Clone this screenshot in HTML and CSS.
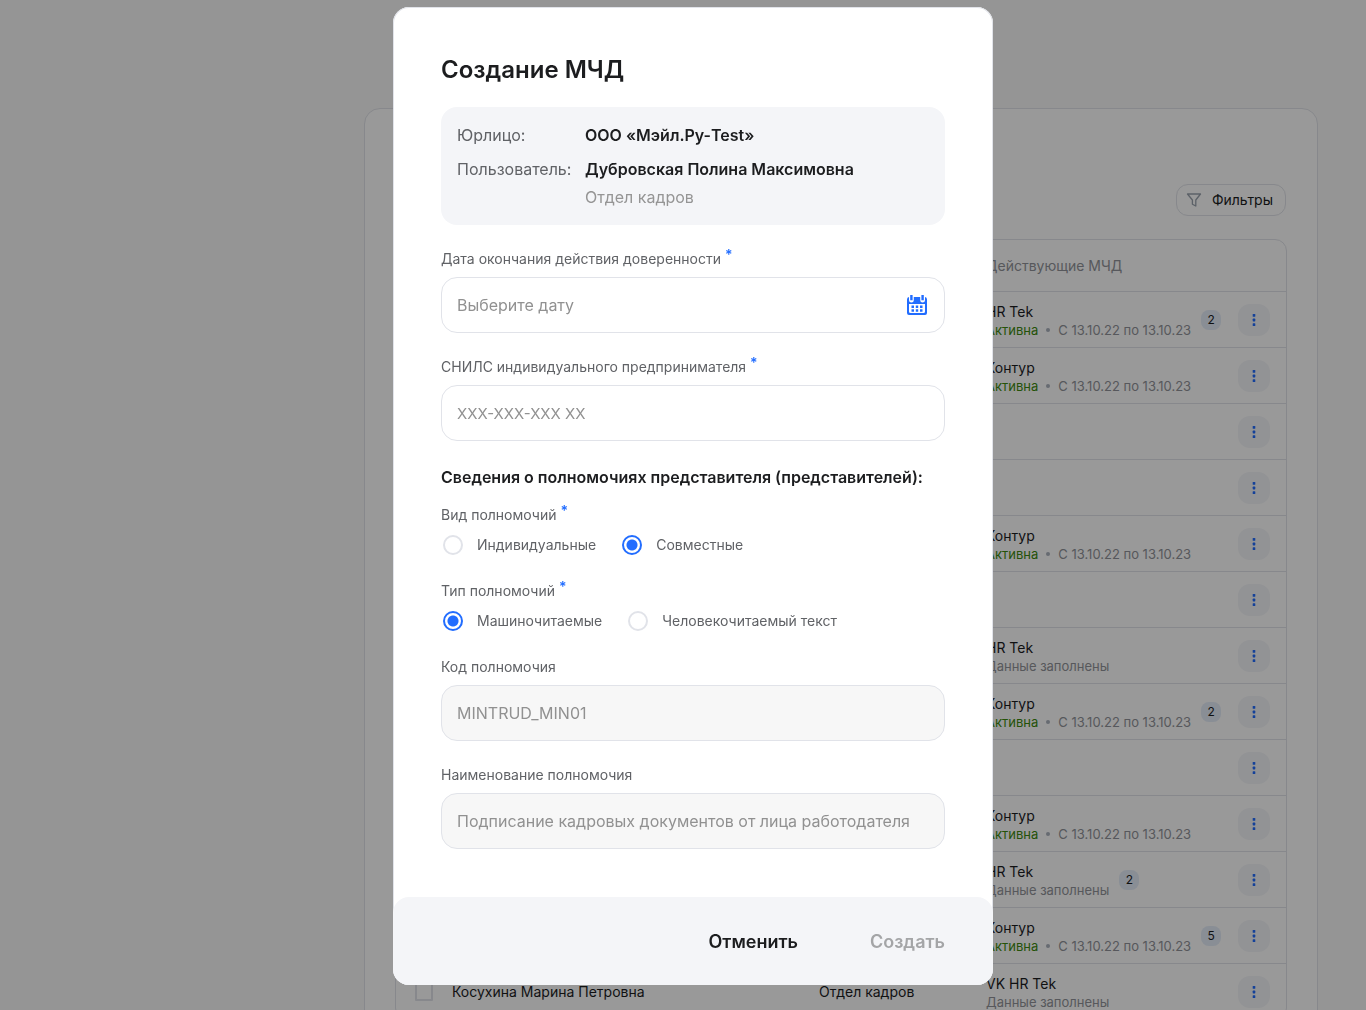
FILE: index.html
```html
<!DOCTYPE html>
<html lang="ru">
<head>
<meta charset="utf-8">
<meta name="viewport" content="width=device-width, initial-scale=1">
<title>Создание МЧД</title>
<link rel="stylesheet" href="styles.css">
</head>
<body>
<svg class="sprite" aria-hidden="true">
  <symbol id="dots" viewBox="0 0 16 16"><rect x="6.700" y="2" width="2.600" height="2.800" rx=".6"/><rect x="6.700" y="6.600" width="2.600" height="2.800" rx=".6"/><rect x="6.700" y="11.200" width="2.600" height="2.800" rx=".6"/></symbol>
</svg>
<main class="page">
  <section class="card">
    <div class="toolbar">
      <button class="filter" type="button">
        <svg width="16" height="16" viewBox="0 0 16 16" fill="none" stroke="currentColor" stroke-width="1.300" stroke-linejoin="round"><path d="M1.500 2h13L9.800 8v6l-3.400-1.800V8z"/></svg>
        Фильтры
      </button>
    </div>
    <div class="table-frame">
      <table class="table">
        <colgroup><col class="col-check"><col><col class="col-dept"><col class="col-docs"><col class="col-menu"></colgroup>
        <thead><tr><th></th><th></th><th></th><th class="docs-head" scope="col">Действующие МЧД</th><th></th></tr></thead>
        <tbody id="rows"></tbody>
      </table>
    </div>
  </section>
</main>

<div class="overlay">
  <form class="modal" role="dialog" aria-modal="true" aria-labelledby="modal-title">
    <div class="modal-body">
      <h1 class="title" id="modal-title">Создание МЧД</h1>
      <dl class="info">
        <dt>Юрлицо:</dt>
        <dd>ООО «Мэйл.Ру-Test»</dd>
        <dt>Пользователь:</dt>
        <dd>Дубровская Полина Максимовна<span class="info-note">Отдел кадров</span></dd>
      </dl>
      <div class="field">
        <label class="label" for="date">Дата окончания действия доверенности <span class="required">*</span></label>
        <div class="control">
          <input class="input" id="date" type="text" placeholder="Выберите дату">
          <button class="calendar" type="button" aria-label="Открыть календарь">
            <svg width="20" height="20" viewBox="0 0 20 20"><path fill="currentColor" fill-rule="evenodd" d="M0 4.500Q0 2 2 2v3.200a2 2 0 0 0 4.800 0V2h6.400v3.200a2 2 0 0 0 4.800 0V2q2 0 2 2.500V18a2 2 0 0 1-2 2H2a2 2 0 0 1-2-2zM2 9v7.500q0 1.500 1.500 1.500h13q1.500 0 1.500-1.500V9z"/><path fill="currentColor" d="M3.200 0h2.400v5.200H3.200zM14.400 0h2.400v5.200h-2.400zM4.500 10.500H7V13H4.500zM8.800 10.500h2.400V13H8.800zM13 10.500h2.500V13H13zM4.500 14.300H7v2.400H4.500zM8.800 14.300h2.400v2.400H8.800zM13 14.300h2.500v2.400H13z"/></svg>
          </button>
        </div>
      </div>
      <div class="field">
        <label class="label" for="snils">СНИЛС индивидуального предпринимателя <span class="required">*</span></label>
        <input class="input mask" id="snils" type="text" placeholder="XXX-XXX-XXX XX">
      </div>
      <h2 class="subtitle">Сведения о полномочиях представителя (представителей):</h2>
      <fieldset class="group group-first">
        <legend class="label">Вид полномочий <span class="required">*</span></legend>
        <div class="options">
          <label class="option"><input class="radio" type="radio" name="kind">Индивидуальные</label>
          <label class="option"><input class="radio" type="radio" name="kind" checked>Совместные</label>
        </div>
      </fieldset>
      <fieldset class="group">
        <legend class="label">Тип полномочий <span class="required">*</span></legend>
        <div class="options">
          <label class="option"><input class="radio" type="radio" name="type" checked>Машиночитаемые</label>
          <label class="option"><input class="radio" type="radio" name="type">Человекочитаемый текст</label>
        </div>
      </fieldset>
      <div class="field">
        <label class="label" for="code">Код полномочия</label>
        <input class="input" id="code" type="text" value="MINTRUD_MIN01" disabled>
      </div>
      <div class="field">
        <label class="label" for="name">Наименование полномочия</label>
        <input class="input" id="name" type="text" value="Подписание кадровых документов от лица работодателя" disabled>
      </div>
    </div>
    <div class="footer">
      <button class="action" type="button">Отменить</button>
      <button class="action" type="submit" disabled>Создать</button>
    </div>
  </form>
</div>
<script src="rows.js"></script>
</body>
</html>
```
FILE: rows.js
```js
const rows = [
  { doc: 'HR Tek', active: true, count: 2 },
  { doc: 'Контур', active: true },
  {},
  {},
  { doc: 'Контур', active: true },
  {},
  { doc: 'HR Tek' },
  { doc: 'Контур', active: true, count: 2 },
  {},
  { doc: 'Контур', active: true },
  { doc: 'HR Tek', count: 2 },
  { doc: 'Контур', active: true, count: 5 },
  { doc: 'VK HR Tek', person: 'Косухина Марина Петровна', dept: 'Отдел кадров' },
];

const status = (row) => row.active
  ? '<span class="active">Активна</span><span class="dot"></span>С 13.10.22 по 13.10.23'
  : 'Данные заполнены';

const docs = (row) => row.doc
  ? `<div class="docs"><div><div>${row.doc}</div><div class="status">${status(row)}</div></div>${row.count ? `<span class="badge">${row.count}</span>` : ''}</div>`
  : '';

document.getElementById('rows').innerHTML = rows.map((row) => `
  <tr>
    <td class="check-cell"><input class="check" type="checkbox" aria-label="Выбрать"></td>
    <td>${row.person || ''}</td>
    <td class="dept">${row.dept || ''}</td>
    <td class="docs-cell">${docs(row)}</td>
    <td class="menu-cell"><button class="menu" type="button" aria-label="Действия"><svg width="16" height="16"><use href="#dots"/></svg></button></td>
  </tr>`).join('');
```
FILE: styles.css
```css
* { box-sizing: border-box; }

body {
  margin: 0;
  overflow: hidden;
  background: #f9f9f9;
  color: #1c1d1f;
  font: 14px/20px Inter, "Liberation Sans", sans-serif;
}

button, input { font: inherit; color: inherit; }
button { border: 0; padding: 0; background: none; cursor: pointer; }
.sprite { display: none; }

.page { height: 100vh; overflow: hidden; padding: 108px 48px 0 364px; }

.card {
  padding: 75px 30px 30px;
  border: 1px solid #e1e3e9;
  border-radius: 16px;
  background: #fff;
}

.toolbar { display: flex; justify-content: flex-end; margin-bottom: 23px; padding-right: 1px; }

.filter {
  display: flex;
  align-items: center;
  gap: 10px;
  height: 32px;
  padding: 0 12px 0 9px;
  border: 1px solid #e1e3e9;
  border-radius: 12px;
}
.filter svg { color: #99a2ad; }

.table-frame { border: 1px solid #e1e3e9; border-radius: 12px; }
.table { width: 100%; table-layout: fixed; border-collapse: separate; border-spacing: 0; }
.table th, .table td { padding: 0; text-align: left; }
.table th { height: 51px; font-weight: 400; color: #919399; }
.table td { height: 56px; border-top: 1px solid #e1e3e9; }
.col-check { width: 56px; }
.col-dept { width: 167px; }
.col-docs { width: 252px; }
.col-menu { width: 64px; }
.table .docs-head, .table .docs-cell, .table .dept, .table .menu-cell { padding-left: 16px; }
.table .check-cell { padding-left: 19px; }

.check {
  appearance: none;
  display: block;
  width: 18px;
  height: 18px;
  margin: 0;
  border: 2px solid #e1e3e9;
  border-radius: 1px;
}

.docs { display: flex; align-items: center; gap: 10px; }
.status { display: flex; align-items: center; font-size: 13px; line-height: 16px; color: #919399; white-space: nowrap; }
.active { color: #3c8a0e; }
.dot { width: 4px; height: 4px; margin: 0 8px; border-radius: 50%; background: #aab2bd; }

.badge {
  width: 20px;
  height: 20px;
  border-radius: 8px;
  background: #e5edf9;
  font-size: 12px;
  text-align: center;
}

.menu {
  display: grid;
  place-items: center;
  width: 32px;
  height: 32px;
  border-radius: 12px;
  background: #f4f5f8;
  color: #226dff;
}
.menu svg { fill: currentColor; }

.overlay {
  position: fixed;
  inset: 0;
  display: flex;
  justify-content: center;
  align-items: flex-start;
  overflow-y: auto;
  padding: 7px 0 16px 20px;
  background: rgb(0 0 0 / 40%);
}

.modal {
  width: 100%;
  max-width: 600px;
  border-radius: 16px;
  background: #fff;
  box-shadow: inset 0 0 0 1px #e1e3e9;
}
.modal-body { padding: 47px 48px 48px; }

.title { margin: 0 0 21px; font-size: 24px; line-height: 32px; font-weight: 600; }

.info {
  display: grid;
  grid-template-columns: 128px 1fr;
  row-gap: 10px;
  margin: 0;
  padding: 16px;
  border-radius: 16px;
  background: #f4f5f8;
  font-size: 16px;
  line-height: 24px;
}
.info dt { color: #606266; }
.info dd { margin: 0; font-weight: 600; }
.info-note { display: block; margin-top: 4px; font-weight: 400; color: #959595; }

.field { margin-top: 24px; }
.label { display: block; margin-bottom: 8px; padding: 0; color: #606266; }
.required { color: #226dff; font-weight: 600; line-height: 0; vertical-align: 4px; }

.control { display: flex; align-items: center; }
.input {
  display: block;
  width: 100%;
  height: 56px;
  padding: 0 15px;
  border: 1px solid #e1e3e9;
  border-radius: 16px;
  background: #fff;
  font-size: 16px;
  line-height: 24px;
}
.mask { font-size: 15px; }
.input::placeholder { color: #919191; opacity: 1; }
.input:disabled { background: #f7f7f7; color: #919191; }
.calendar { display: flex; flex: none; margin-left: -38px; color: #226dff; }

.subtitle { margin: 24px 0 0; font-size: 16px; line-height: 24px; font-weight: 600; }

.group { margin: 24px 0 0; padding: 0; border: 0; }
.group-first { margin-top: 16px; }
.options { display: flex; flex-wrap: wrap; gap: 8px 24px; }
.option { display: flex; align-items: center; gap: 14px; height: 24px; padding-left: 2px; color: #606266; }
.radio {
  appearance: none;
  flex: none;
  width: 20px;
  height: 20px;
  margin: 0;
  border: 2px solid #e1e3e9;
  border-radius: 50%;
  background: #fff;
}
.radio:checked { border-color: #226dff; background: radial-gradient(circle, #226dff 5px, #fff 6px); }

.footer {
  display: flex;
  justify-content: flex-end;
  gap: 72px;
  padding: 33px 48px 31px;
  border-radius: 16px;
  background: #f4f5f8;
}
.action { font-size: 18px; line-height: 24px; font-weight: 600; }
.action:disabled { color: #a4a5a7; cursor: default; }
```
